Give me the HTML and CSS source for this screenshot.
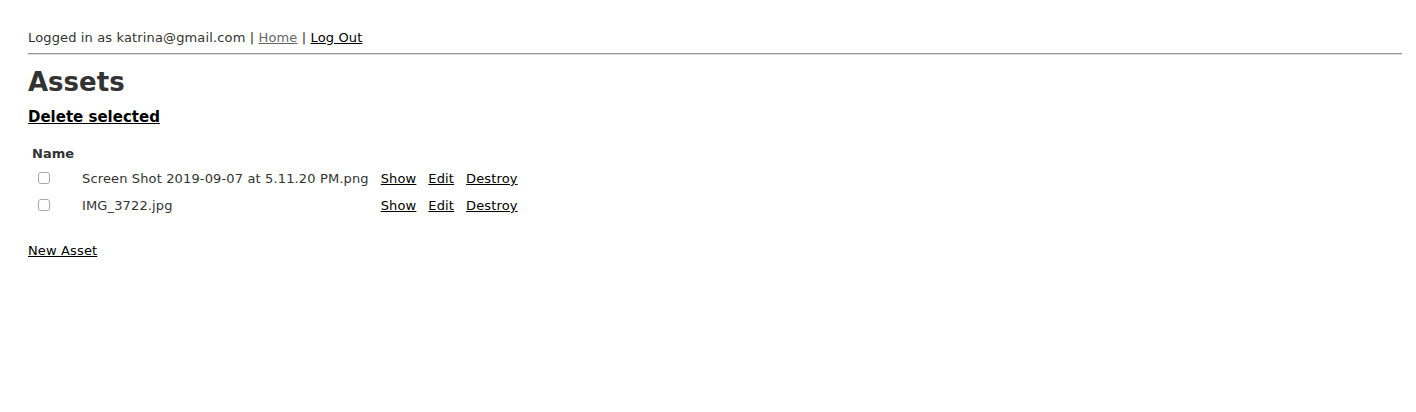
FILE: index.html
```html
<!DOCTYPE html>
<html>
<head>
<meta charset="utf-8">
<title>Assets</title>
<link rel="stylesheet" href="styles.css">
</head>
<body>
<div class="userbar">Logged in as katrina@gmail.com | <a class="visited" href="#">Home</a> | <a href="#">Log Out</a></div>
<hr class="rule">
<h1 class="title">Assets</h1>
<h3 class="bulk"><a href="#">Delete selected</a></h3>
<table class="assets">
  <thead>
    <tr><th class="name-head">Name</th><th></th><th colspan="3"></th></tr>
  </thead>
  <tbody>
    <tr>
      <td><input type="checkbox" class="check"></td>
      <td>Screen Shot 2019-09-07 at 5.11.20 PM.png</td>
      <td><a href="#">Show</a></td>
      <td><a href="#">Edit</a></td>
      <td><a href="#">Destroy</a></td>
    </tr>
    <tr>
      <td><input type="checkbox" class="check"></td>
      <td>IMG_3722.jpg</td>
      <td><a href="#">Show</a></td>
      <td><a href="#">Edit</a></td>
      <td><a href="#">Destroy</a></td>
    </tr>
  </tbody>
</table>
<div class="footer-link"><a href="#">New Asset</a></div>
</body>
</html>
```

FILE: styles.css
```css
body {
  background-color: #fff;
  color: #333;
  margin: 29px 14px 28px 28px;
  font-family: "DejaVu Sans", Verdana, sans-serif;
  font-size: 13px;
  line-height: 18px;
  letter-spacing: 0.14px;
}
a { color: #000; }
a.visited { color: #666; }
.userbar { margin: 0; }
.rule {
  margin: 6px 0 0 0;
  border: 0;
  border-top: 1px solid #999;
  border-bottom: 1px solid #ddd;
  height: 0;
}
.title {
  font-size: 26px;
  line-height: 30px;
  margin: 12px 0 0 0;
  letter-spacing: 0;
}
.bulk {
  font-size: 15px;
  line-height: 18px;
  margin: 11px 0 0 0;
  letter-spacing: 0;
}
.assets {
  margin-top: 16px;
  border-spacing: 2px;
}
.assets th {
  text-align: left;
  padding: 1px 1px 5px 2px;
  letter-spacing: 0;
}
.assets td {
  padding: 0 5px 7px;
}
.check {
  -webkit-appearance: none;
  appearance: none;
  box-sizing: border-box;
  width: 12px;
  height: 12px;
  margin: 0 3px 0 3px;
  border: 1px solid #a9a9a9;
  border-radius: 3px;
  background: #fff;
  vertical-align: -1px;
}
.footer-link { margin-top: 18px; }
```
